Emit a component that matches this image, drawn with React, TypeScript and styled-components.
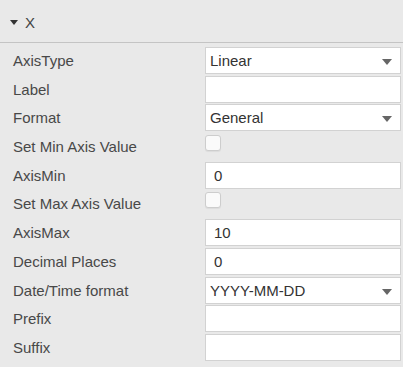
import styled, { createGlobalStyle } from 'styled-components';

const GlobalStyle = createGlobalStyle`
  body {
    margin: 0;
    background: #e9e9e9;
    font-family: "Liberation Sans", Arial, sans-serif;
    font-size: 15px;
    color: #444;
  }
`;

const Panel = styled.div`
  width: 403px;
  background: #e9e9e9;
`;

const Header = styled.div`
  height: 39px;
  padding-top: 3px;
  display: flex;
  align-items: center;
  padding-left: 10px;
  gap: 7px;
  border-bottom: 1px solid #c4c4c4;
  color: #444;
`;

const Caret = styled.span`
  width: 0;
  height: 0;
  border-left: 4px solid transparent;
  border-right: 4px solid transparent;
  border-top: 5px solid #333;
`;

const Form = styled.div`
  display: grid;
  grid-template-columns: 192px 196px;
  grid-auto-rows: 27px;
  row-gap: 1.7px;
  padding: 4px 0 0 13px;
`;

const Label = styled.label`
  display: flex;
  align-items: center;
  color: #484848;
`;

const Input = styled.input`
  box-sizing: border-box;
  width: 100%;
  height: 27px;
  margin: 0;
  padding: 0 8px;
  border: 1px solid #d2d2d2;
  background: #fff;
  font-family: inherit;
  font-size: 15px;
  color: #333;
  outline: none;
`;

const SelectBox = styled.div`
  position: relative;
`;

const Select = styled.select`
  box-sizing: border-box;
  width: 100%;
  height: 27px;
  margin: 0;
  padding: 0 4px;
  border: 1px solid #d2d2d2;
  border-radius: 0;
  background: #fff;
  font-family: inherit;
  font-size: 15px;
  color: #333;
  appearance: none;
  outline: none;
`;

const Arrow = styled.span`
  position: absolute;
  right: 9px;
  top: 12px;
  width: 0;
  height: 0;
  border-left: 5px solid transparent;
  border-right: 5px solid transparent;
  border-top: 6px solid #666;
  pointer-events: none;
`;

const Check = styled.input`
  box-sizing: border-box;
  align-self: start;
  width: 16px;
  height: 16px;
  margin: 2px 0 0;
  appearance: none;
  border: 1px solid #cdcdcd;
  border-radius: 3px;
  background: #fafafa;
  box-shadow: 0 1px 1px rgba(0, 0, 0, 0.06);
`;

type Field =
  | { kind: 'select'; label: string; value: string; options: string[] }
  | { kind: 'text'; label: string; value: string }
  | { kind: 'check'; label: string };

const fields: Field[] = [
  { kind: 'select', label: 'AxisType', value: 'Linear', options: ['Linear', 'Logarithmic', 'DateTime'] },
  { kind: 'text', label: 'Label', value: '' },
  { kind: 'select', label: 'Format', value: 'General', options: ['General', 'Number', 'Percent'] },
  { kind: 'check', label: 'Set Min Axis Value' },
  { kind: 'text', label: 'AxisMin', value: '0' },
  { kind: 'check', label: 'Set Max Axis Value' },
  { kind: 'text', label: 'AxisMax', value: '10' },
  { kind: 'text', label: 'Decimal Places', value: '0' },
  { kind: 'select', label: 'Date/Time format', value: 'YYYY-MM-DD', options: ['YYYY-MM-DD', 'DD/MM/YYYY', 'MM/DD/YYYY'] },
  { kind: 'text', label: 'Prefix', value: '' },
  { kind: 'text', label: 'Suffix', value: '' },
];

const App = () => {
  return (
    <Panel>
      <GlobalStyle />
      <Header>
        <Caret />
        <span>X</span>
      </Header>
      <Form>
        {fields.map((f) => {
          const id = f.label.replace(/\W/g, '');
          return [
            <Label key={id + '-l'} htmlFor={id}>{f.label}</Label>,
            f.kind === 'select' ? (
              <SelectBox key={id}>
                <Select id={id} defaultValue={f.value}>
                  {f.options.map((o) => (
                    <option key={o}>{o}</option>
                  ))}
                </Select>
                <Arrow />
              </SelectBox>
            ) : f.kind === 'text' ? (
              <Input key={id} id={id} type='text' defaultValue={f.value} />
            ) : (
              <Check key={id} id={id} type='checkbox' />
            ),
          ];
        })}
      </Form>
    </Panel>
  );
};

export default App;
